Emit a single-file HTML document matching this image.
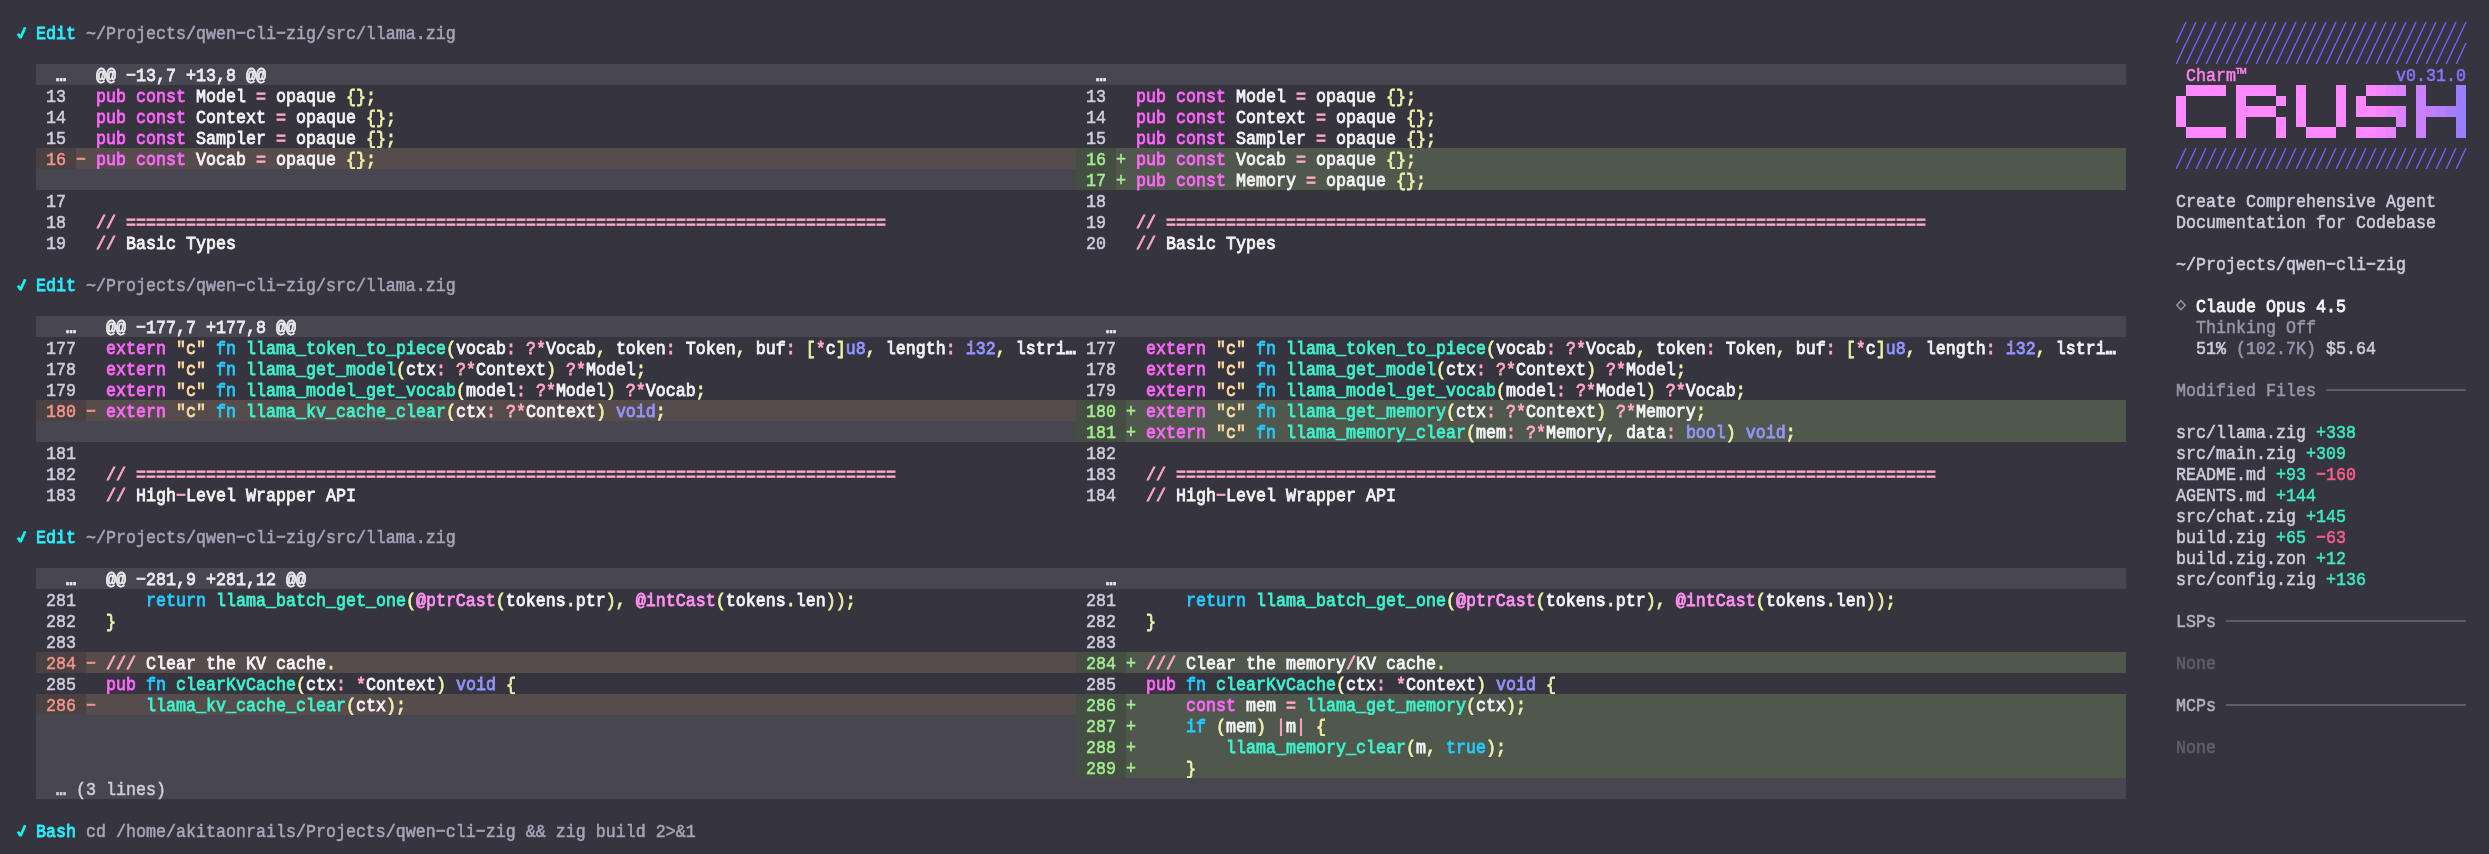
<!DOCTYPE html>
<html><head><meta charset="utf-8"><style>
html,body{margin:0;padding:0;width:2489px;height:854px;overflow:hidden;background:#36343f;}
.b{position:absolute;}
.t.c{-webkit-text-stroke:0.75px currentColor;}
b{font-weight:bold;}
.t{position:absolute;height:21px;line-height:21px;white-space:pre;font-family:"Liberation Mono",monospace;font-size:16.667px;color:#f6f4f8;font-weight:normal;-webkit-text-stroke:0.5px currentColor;transform-origin:0 0;transform:translateY(0.4px) scaleY(1.09);will-change:transform;}
</style></head><body>
<svg class="b" style="left:16px;top:22px" width="12" height="21"><path d="M1.9 11.6L4.5 15.9L9.2 5.2" stroke="#12f6ec" stroke-width="2.7" fill="none" stroke-linejoin="bevel"/></svg>
<div class="t c" style="left:36px;top:22px"><span style="color:#26f0ff">Edit</span></div>
<div class="t" style="left:86px;top:22px"><span style="color:#a6a4b8">~/Projects/qwen−cli−zig/src/llama.zig</span></div>
<div class="b" style="left:36px;top:64px;width:1040px;height:21px;background:#484651"></div>
<div class="t" style="left:36px;top:64px">  </div>
<div class="t" style="left:56px;top:64px"><span style="color:#ecebf0"><b>…</b></span></div>
<div class="t c" style="left:96px;top:64px"><span style="color:#ecebf0">@@ −13,7 +13,8 @@</span></div>
<div class="b" style="left:1076px;top:64px;width:1050px;height:21px;background:#484651"></div>
<div class="t" style="left:1076px;top:64px">  </div>
<div class="t" style="left:1096px;top:64px"><span style="color:#ecebf0"><b>…</b></span></div>
<div class="t" style="left:46px;top:85px"><span style="color:#d0ccdd">13</span></div>
<div class="t c" style="left:96px;top:85px"><span style="color:#ff68fc">pub</span> <span style="color:#ff68fc">const</span> <span style="color:#f6f4f8">Model</span> <span style="color:#ffa8c4">=</span> <span style="color:#f6f4f8">opaque</span> <span style="color:#eef0a8">{</span><span style="color:#eef0a8">}</span><span style="color:#eef0a8">;</span></div>
<div class="t" style="left:1086px;top:85px"><span style="color:#d0ccdd">13</span></div>
<div class="t c" style="left:1136px;top:85px"><span style="color:#ff68fc">pub</span> <span style="color:#ff68fc">const</span> <span style="color:#f6f4f8">Model</span> <span style="color:#ffa8c4">=</span> <span style="color:#f6f4f8">opaque</span> <span style="color:#eef0a8">{</span><span style="color:#eef0a8">}</span><span style="color:#eef0a8">;</span></div>
<div class="t" style="left:46px;top:106px"><span style="color:#d0ccdd">14</span></div>
<div class="t c" style="left:96px;top:106px"><span style="color:#ff68fc">pub</span> <span style="color:#ff68fc">const</span> <span style="color:#f6f4f8">Context</span> <span style="color:#ffa8c4">=</span> <span style="color:#f6f4f8">opaque</span> <span style="color:#eef0a8">{</span><span style="color:#eef0a8">}</span><span style="color:#eef0a8">;</span></div>
<div class="t" style="left:1086px;top:106px"><span style="color:#d0ccdd">14</span></div>
<div class="t c" style="left:1136px;top:106px"><span style="color:#ff68fc">pub</span> <span style="color:#ff68fc">const</span> <span style="color:#f6f4f8">Context</span> <span style="color:#ffa8c4">=</span> <span style="color:#f6f4f8">opaque</span> <span style="color:#eef0a8">{</span><span style="color:#eef0a8">}</span><span style="color:#eef0a8">;</span></div>
<div class="t" style="left:46px;top:127px"><span style="color:#d0ccdd">15</span></div>
<div class="t c" style="left:96px;top:127px"><span style="color:#ff68fc">pub</span> <span style="color:#ff68fc">const</span> <span style="color:#f6f4f8">Sampler</span> <span style="color:#ffa8c4">=</span> <span style="color:#f6f4f8">opaque</span> <span style="color:#eef0a8">{</span><span style="color:#eef0a8">}</span><span style="color:#eef0a8">;</span></div>
<div class="t" style="left:1086px;top:127px"><span style="color:#d0ccdd">15</span></div>
<div class="t c" style="left:1136px;top:127px"><span style="color:#ff68fc">pub</span> <span style="color:#ff68fc">const</span> <span style="color:#f6f4f8">Sampler</span> <span style="color:#ffa8c4">=</span> <span style="color:#f6f4f8">opaque</span> <span style="color:#eef0a8">{</span><span style="color:#eef0a8">}</span><span style="color:#eef0a8">;</span></div>
<div class="b" style="left:36px;top:148px;width:40px;height:21px;background:#494142"></div>
<div class="b" style="left:76px;top:148px;width:1000px;height:21px;background:#564c4c"></div>
<div class="t" style="left:46px;top:148px"><span style="color:#f4948c">16</span></div>
<div class="t" style="left:76px;top:148px"><span style="color:#f4948c">−</span></div>
<div class="t c" style="left:96px;top:148px"><span style="color:#ff68fc">pub</span> <span style="color:#ff68fc">const</span> <span style="color:#f6f4f8">Vocab</span> <span style="color:#ffa8c4">=</span> <span style="color:#f6f4f8">opaque</span> <span style="color:#eef0a8">{</span><span style="color:#eef0a8">}</span><span style="color:#eef0a8">;</span></div>
<div class="b" style="left:1076px;top:148px;width:40px;height:21px;background:#444e43"></div>
<div class="b" style="left:1116px;top:148px;width:1010px;height:21px;background:#50584d"></div>
<div class="t" style="left:1086px;top:148px"><span style="color:#a2ec8f">16</span></div>
<div class="t" style="left:1116px;top:148px"><span style="color:#a2ec8f">+</span></div>
<div class="t c" style="left:1136px;top:148px"><span style="color:#ff68fc">pub</span> <span style="color:#ff68fc">const</span> <span style="color:#f6f4f8">Vocab</span> <span style="color:#ffa8c4">=</span> <span style="color:#f6f4f8">opaque</span> <span style="color:#eef0a8">{</span><span style="color:#eef0a8">}</span><span style="color:#eef0a8">;</span></div>
<div class="b" style="left:36px;top:169px;width:1040px;height:21px;background:#484651"></div>
<div class="b" style="left:1076px;top:169px;width:40px;height:21px;background:#444e43"></div>
<div class="b" style="left:1116px;top:169px;width:1010px;height:21px;background:#50584d"></div>
<div class="t" style="left:1086px;top:169px"><span style="color:#a2ec8f">17</span></div>
<div class="t" style="left:1116px;top:169px"><span style="color:#a2ec8f">+</span></div>
<div class="t c" style="left:1136px;top:169px"><span style="color:#ff68fc">pub</span> <span style="color:#ff68fc">const</span> <span style="color:#f6f4f8">Memory</span> <span style="color:#ffa8c4">=</span> <span style="color:#f6f4f8">opaque</span> <span style="color:#eef0a8">{</span><span style="color:#eef0a8">}</span><span style="color:#eef0a8">;</span></div>
<div class="t" style="left:46px;top:190px"><span style="color:#d0ccdd">17</span></div>
<div class="t" style="left:1086px;top:190px"><span style="color:#d0ccdd">18</span></div>
<div class="t" style="left:46px;top:211px"><span style="color:#d0ccdd">18</span></div>
<div class="t c" style="left:96px;top:211px"><span style="color:#ffa8c4">/</span><span style="color:#ffa8c4">/</span> <span style="color:#ffa8c4">=</span><span style="color:#ffa8c4">=</span><span style="color:#ffa8c4">=</span><span style="color:#ffa8c4">=</span><span style="color:#ffa8c4">=</span><span style="color:#ffa8c4">=</span><span style="color:#ffa8c4">=</span><span style="color:#ffa8c4">=</span><span style="color:#ffa8c4">=</span><span style="color:#ffa8c4">=</span><span style="color:#ffa8c4">=</span><span style="color:#ffa8c4">=</span><span style="color:#ffa8c4">=</span><span style="color:#ffa8c4">=</span><span style="color:#ffa8c4">=</span><span style="color:#ffa8c4">=</span><span style="color:#ffa8c4">=</span><span style="color:#ffa8c4">=</span><span style="color:#ffa8c4">=</span><span style="color:#ffa8c4">=</span><span style="color:#ffa8c4">=</span><span style="color:#ffa8c4">=</span><span style="color:#ffa8c4">=</span><span style="color:#ffa8c4">=</span><span style="color:#ffa8c4">=</span><span style="color:#ffa8c4">=</span><span style="color:#ffa8c4">=</span><span style="color:#ffa8c4">=</span><span style="color:#ffa8c4">=</span><span style="color:#ffa8c4">=</span><span style="color:#ffa8c4">=</span><span style="color:#ffa8c4">=</span><span style="color:#ffa8c4">=</span><span style="color:#ffa8c4">=</span><span style="color:#ffa8c4">=</span><span style="color:#ffa8c4">=</span><span style="color:#ffa8c4">=</span><span style="color:#ffa8c4">=</span><span style="color:#ffa8c4">=</span><span style="color:#ffa8c4">=</span><span style="color:#ffa8c4">=</span><span style="color:#ffa8c4">=</span><span style="color:#ffa8c4">=</span><span style="color:#ffa8c4">=</span><span style="color:#ffa8c4">=</span><span style="color:#ffa8c4">=</span><span style="color:#ffa8c4">=</span><span style="color:#ffa8c4">=</span><span style="color:#ffa8c4">=</span><span style="color:#ffa8c4">=</span><span style="color:#ffa8c4">=</span><span style="color:#ffa8c4">=</span><span style="color:#ffa8c4">=</span><span style="color:#ffa8c4">=</span><span style="color:#ffa8c4">=</span><span style="color:#ffa8c4">=</span><span style="color:#ffa8c4">=</span><span style="color:#ffa8c4">=</span><span style="color:#ffa8c4">=</span><span style="color:#ffa8c4">=</span><span style="color:#ffa8c4">=</span><span style="color:#ffa8c4">=</span><span style="color:#ffa8c4">=</span><span style="color:#ffa8c4">=</span><span style="color:#ffa8c4">=</span><span style="color:#ffa8c4">=</span><span style="color:#ffa8c4">=</span><span style="color:#ffa8c4">=</span><span style="color:#ffa8c4">=</span><span style="color:#ffa8c4">=</span><span style="color:#ffa8c4">=</span><span style="color:#ffa8c4">=</span><span style="color:#ffa8c4">=</span><span style="color:#ffa8c4">=</span><span style="color:#ffa8c4">=</span><span style="color:#ffa8c4">=</span></div>
<div class="t" style="left:1086px;top:211px"><span style="color:#d0ccdd">19</span></div>
<div class="t c" style="left:1136px;top:211px"><span style="color:#ffa8c4">/</span><span style="color:#ffa8c4">/</span> <span style="color:#ffa8c4">=</span><span style="color:#ffa8c4">=</span><span style="color:#ffa8c4">=</span><span style="color:#ffa8c4">=</span><span style="color:#ffa8c4">=</span><span style="color:#ffa8c4">=</span><span style="color:#ffa8c4">=</span><span style="color:#ffa8c4">=</span><span style="color:#ffa8c4">=</span><span style="color:#ffa8c4">=</span><span style="color:#ffa8c4">=</span><span style="color:#ffa8c4">=</span><span style="color:#ffa8c4">=</span><span style="color:#ffa8c4">=</span><span style="color:#ffa8c4">=</span><span style="color:#ffa8c4">=</span><span style="color:#ffa8c4">=</span><span style="color:#ffa8c4">=</span><span style="color:#ffa8c4">=</span><span style="color:#ffa8c4">=</span><span style="color:#ffa8c4">=</span><span style="color:#ffa8c4">=</span><span style="color:#ffa8c4">=</span><span style="color:#ffa8c4">=</span><span style="color:#ffa8c4">=</span><span style="color:#ffa8c4">=</span><span style="color:#ffa8c4">=</span><span style="color:#ffa8c4">=</span><span style="color:#ffa8c4">=</span><span style="color:#ffa8c4">=</span><span style="color:#ffa8c4">=</span><span style="color:#ffa8c4">=</span><span style="color:#ffa8c4">=</span><span style="color:#ffa8c4">=</span><span style="color:#ffa8c4">=</span><span style="color:#ffa8c4">=</span><span style="color:#ffa8c4">=</span><span style="color:#ffa8c4">=</span><span style="color:#ffa8c4">=</span><span style="color:#ffa8c4">=</span><span style="color:#ffa8c4">=</span><span style="color:#ffa8c4">=</span><span style="color:#ffa8c4">=</span><span style="color:#ffa8c4">=</span><span style="color:#ffa8c4">=</span><span style="color:#ffa8c4">=</span><span style="color:#ffa8c4">=</span><span style="color:#ffa8c4">=</span><span style="color:#ffa8c4">=</span><span style="color:#ffa8c4">=</span><span style="color:#ffa8c4">=</span><span style="color:#ffa8c4">=</span><span style="color:#ffa8c4">=</span><span style="color:#ffa8c4">=</span><span style="color:#ffa8c4">=</span><span style="color:#ffa8c4">=</span><span style="color:#ffa8c4">=</span><span style="color:#ffa8c4">=</span><span style="color:#ffa8c4">=</span><span style="color:#ffa8c4">=</span><span style="color:#ffa8c4">=</span><span style="color:#ffa8c4">=</span><span style="color:#ffa8c4">=</span><span style="color:#ffa8c4">=</span><span style="color:#ffa8c4">=</span><span style="color:#ffa8c4">=</span><span style="color:#ffa8c4">=</span><span style="color:#ffa8c4">=</span><span style="color:#ffa8c4">=</span><span style="color:#ffa8c4">=</span><span style="color:#ffa8c4">=</span><span style="color:#ffa8c4">=</span><span style="color:#ffa8c4">=</span><span style="color:#ffa8c4">=</span><span style="color:#ffa8c4">=</span><span style="color:#ffa8c4">=</span></div>
<div class="t" style="left:46px;top:232px"><span style="color:#d0ccdd">19</span></div>
<div class="t c" style="left:96px;top:232px"><span style="color:#ffa8c4">/</span><span style="color:#ffa8c4">/</span> <span style="color:#f6f4f8">Basic</span> <span style="color:#f6f4f8">Types</span></div>
<div class="t" style="left:1086px;top:232px"><span style="color:#d0ccdd">20</span></div>
<div class="t c" style="left:1136px;top:232px"><span style="color:#ffa8c4">/</span><span style="color:#ffa8c4">/</span> <span style="color:#f6f4f8">Basic</span> <span style="color:#f6f4f8">Types</span></div>
<svg class="b" style="left:16px;top:274px" width="12" height="21"><path d="M1.9 11.6L4.5 15.9L9.2 5.2" stroke="#12f6ec" stroke-width="2.7" fill="none" stroke-linejoin="bevel"/></svg>
<div class="t c" style="left:36px;top:274px"><span style="color:#26f0ff">Edit</span></div>
<div class="t" style="left:86px;top:274px"><span style="color:#a6a4b8">~/Projects/qwen−cli−zig/src/llama.zig</span></div>
<div class="b" style="left:36px;top:316px;width:1040px;height:21px;background:#484651"></div>
<div class="t" style="left:36px;top:316px">   </div>
<div class="t" style="left:66px;top:316px"><span style="color:#ecebf0"><b>…</b></span></div>
<div class="t c" style="left:106px;top:316px"><span style="color:#ecebf0">@@ −177,7 +177,8 @@</span></div>
<div class="b" style="left:1076px;top:316px;width:1050px;height:21px;background:#484651"></div>
<div class="t" style="left:1076px;top:316px">   </div>
<div class="t" style="left:1106px;top:316px"><span style="color:#ecebf0"><b>…</b></span></div>
<div class="t" style="left:46px;top:337px"><span style="color:#d0ccdd">177</span></div>
<div class="t c" style="left:106px;top:337px"><span style="color:#ff68fc">extern</span> <span style="color:#ffdca2">"c"</span> <span style="color:#22ccff">fn</span> <span style="color:#3ef2cc">llama_token_to_piece</span><span style="color:#eef0a8">(</span><span style="color:#f6f4f8">vocab</span><span style="color:#ffa8c4">:</span> <span style="color:#ffa8c4">?</span><span style="color:#ffa8c4">*</span><span style="color:#f6f4f8">Vocab</span><span style="color:#eef0a8">,</span> <span style="color:#f6f4f8">token</span><span style="color:#ffa8c4">:</span> <span style="color:#f6f4f8">Token</span><span style="color:#eef0a8">,</span> <span style="color:#f6f4f8">buf</span><span style="color:#ffa8c4">:</span> <span style="color:#eef0a8">[</span><span style="color:#ffa8c4">*</span><span style="color:#f6f4f8">c</span><span style="color:#eef0a8">]</span><span style="color:#9494ff">u8</span><span style="color:#eef0a8">,</span> <span style="color:#f6f4f8">length</span><span style="color:#ffa8c4">:</span> <span style="color:#9494ff">i32</span><span style="color:#eef0a8">,</span> <span style="color:#f6f4f8">lstri</span><span style="color:#f6f4f8"><b>…</b></span></div>
<div class="t" style="left:1086px;top:337px"><span style="color:#d0ccdd">177</span></div>
<div class="t c" style="left:1146px;top:337px"><span style="color:#ff68fc">extern</span> <span style="color:#ffdca2">"c"</span> <span style="color:#22ccff">fn</span> <span style="color:#3ef2cc">llama_token_to_piece</span><span style="color:#eef0a8">(</span><span style="color:#f6f4f8">vocab</span><span style="color:#ffa8c4">:</span> <span style="color:#ffa8c4">?</span><span style="color:#ffa8c4">*</span><span style="color:#f6f4f8">Vocab</span><span style="color:#eef0a8">,</span> <span style="color:#f6f4f8">token</span><span style="color:#ffa8c4">:</span> <span style="color:#f6f4f8">Token</span><span style="color:#eef0a8">,</span> <span style="color:#f6f4f8">buf</span><span style="color:#ffa8c4">:</span> <span style="color:#eef0a8">[</span><span style="color:#ffa8c4">*</span><span style="color:#f6f4f8">c</span><span style="color:#eef0a8">]</span><span style="color:#9494ff">u8</span><span style="color:#eef0a8">,</span> <span style="color:#f6f4f8">length</span><span style="color:#ffa8c4">:</span> <span style="color:#9494ff">i32</span><span style="color:#eef0a8">,</span> <span style="color:#f6f4f8">lstri</span><span style="color:#f6f4f8"><b>…</b></span></div>
<div class="t" style="left:46px;top:358px"><span style="color:#d0ccdd">178</span></div>
<div class="t c" style="left:106px;top:358px"><span style="color:#ff68fc">extern</span> <span style="color:#ffdca2">"c"</span> <span style="color:#22ccff">fn</span> <span style="color:#3ef2cc">llama_get_model</span><span style="color:#eef0a8">(</span><span style="color:#f6f4f8">ctx</span><span style="color:#ffa8c4">:</span> <span style="color:#ffa8c4">?</span><span style="color:#ffa8c4">*</span><span style="color:#f6f4f8">Context</span><span style="color:#eef0a8">)</span> <span style="color:#ffa8c4">?</span><span style="color:#ffa8c4">*</span><span style="color:#f6f4f8">Model</span><span style="color:#eef0a8">;</span></div>
<div class="t" style="left:1086px;top:358px"><span style="color:#d0ccdd">178</span></div>
<div class="t c" style="left:1146px;top:358px"><span style="color:#ff68fc">extern</span> <span style="color:#ffdca2">"c"</span> <span style="color:#22ccff">fn</span> <span style="color:#3ef2cc">llama_get_model</span><span style="color:#eef0a8">(</span><span style="color:#f6f4f8">ctx</span><span style="color:#ffa8c4">:</span> <span style="color:#ffa8c4">?</span><span style="color:#ffa8c4">*</span><span style="color:#f6f4f8">Context</span><span style="color:#eef0a8">)</span> <span style="color:#ffa8c4">?</span><span style="color:#ffa8c4">*</span><span style="color:#f6f4f8">Model</span><span style="color:#eef0a8">;</span></div>
<div class="t" style="left:46px;top:379px"><span style="color:#d0ccdd">179</span></div>
<div class="t c" style="left:106px;top:379px"><span style="color:#ff68fc">extern</span> <span style="color:#ffdca2">"c"</span> <span style="color:#22ccff">fn</span> <span style="color:#3ef2cc">llama_model_get_vocab</span><span style="color:#eef0a8">(</span><span style="color:#f6f4f8">model</span><span style="color:#ffa8c4">:</span> <span style="color:#ffa8c4">?</span><span style="color:#ffa8c4">*</span><span style="color:#f6f4f8">Model</span><span style="color:#eef0a8">)</span> <span style="color:#ffa8c4">?</span><span style="color:#ffa8c4">*</span><span style="color:#f6f4f8">Vocab</span><span style="color:#eef0a8">;</span></div>
<div class="t" style="left:1086px;top:379px"><span style="color:#d0ccdd">179</span></div>
<div class="t c" style="left:1146px;top:379px"><span style="color:#ff68fc">extern</span> <span style="color:#ffdca2">"c"</span> <span style="color:#22ccff">fn</span> <span style="color:#3ef2cc">llama_model_get_vocab</span><span style="color:#eef0a8">(</span><span style="color:#f6f4f8">model</span><span style="color:#ffa8c4">:</span> <span style="color:#ffa8c4">?</span><span style="color:#ffa8c4">*</span><span style="color:#f6f4f8">Model</span><span style="color:#eef0a8">)</span> <span style="color:#ffa8c4">?</span><span style="color:#ffa8c4">*</span><span style="color:#f6f4f8">Vocab</span><span style="color:#eef0a8">;</span></div>
<div class="b" style="left:36px;top:400px;width:50px;height:21px;background:#494142"></div>
<div class="b" style="left:86px;top:400px;width:990px;height:21px;background:#564c4c"></div>
<div class="t" style="left:46px;top:400px"><span style="color:#f4948c">180</span></div>
<div class="t" style="left:86px;top:400px"><span style="color:#f4948c">−</span></div>
<div class="t c" style="left:106px;top:400px"><span style="color:#ff68fc">extern</span> <span style="color:#ffdca2">"c"</span> <span style="color:#22ccff">fn</span> <span style="color:#3ef2cc">llama_kv_cache_clear</span><span style="color:#eef0a8">(</span><span style="color:#f6f4f8">ctx</span><span style="color:#ffa8c4">:</span> <span style="color:#ffa8c4">?</span><span style="color:#ffa8c4">*</span><span style="color:#f6f4f8">Context</span><span style="color:#eef0a8">)</span> <span style="color:#9494ff">void</span><span style="color:#eef0a8">;</span></div>
<div class="b" style="left:1076px;top:400px;width:50px;height:21px;background:#444e43"></div>
<div class="b" style="left:1126px;top:400px;width:1000px;height:21px;background:#50584d"></div>
<div class="t" style="left:1086px;top:400px"><span style="color:#a2ec8f">180</span></div>
<div class="t" style="left:1126px;top:400px"><span style="color:#a2ec8f">+</span></div>
<div class="t c" style="left:1146px;top:400px"><span style="color:#ff68fc">extern</span> <span style="color:#ffdca2">"c"</span> <span style="color:#22ccff">fn</span> <span style="color:#3ef2cc">llama_get_memory</span><span style="color:#eef0a8">(</span><span style="color:#f6f4f8">ctx</span><span style="color:#ffa8c4">:</span> <span style="color:#ffa8c4">?</span><span style="color:#ffa8c4">*</span><span style="color:#f6f4f8">Context</span><span style="color:#eef0a8">)</span> <span style="color:#ffa8c4">?</span><span style="color:#ffa8c4">*</span><span style="color:#f6f4f8">Memory</span><span style="color:#eef0a8">;</span></div>
<div class="b" style="left:36px;top:421px;width:1040px;height:21px;background:#484651"></div>
<div class="b" style="left:1076px;top:421px;width:50px;height:21px;background:#444e43"></div>
<div class="b" style="left:1126px;top:421px;width:1000px;height:21px;background:#50584d"></div>
<div class="t" style="left:1086px;top:421px"><span style="color:#a2ec8f">181</span></div>
<div class="t" style="left:1126px;top:421px"><span style="color:#a2ec8f">+</span></div>
<div class="t c" style="left:1146px;top:421px"><span style="color:#ff68fc">extern</span> <span style="color:#ffdca2">"c"</span> <span style="color:#22ccff">fn</span> <span style="color:#3ef2cc">llama_memory_clear</span><span style="color:#eef0a8">(</span><span style="color:#f6f4f8">mem</span><span style="color:#ffa8c4">:</span> <span style="color:#ffa8c4">?</span><span style="color:#ffa8c4">*</span><span style="color:#f6f4f8">Memory</span><span style="color:#eef0a8">,</span> <span style="color:#f6f4f8">data</span><span style="color:#ffa8c4">:</span> <span style="color:#9494ff">bool</span><span style="color:#eef0a8">)</span> <span style="color:#9494ff">void</span><span style="color:#eef0a8">;</span></div>
<div class="t" style="left:46px;top:442px"><span style="color:#d0ccdd">181</span></div>
<div class="t" style="left:1086px;top:442px"><span style="color:#d0ccdd">182</span></div>
<div class="t" style="left:46px;top:463px"><span style="color:#d0ccdd">182</span></div>
<div class="t c" style="left:106px;top:463px"><span style="color:#ffa8c4">/</span><span style="color:#ffa8c4">/</span> <span style="color:#ffa8c4">=</span><span style="color:#ffa8c4">=</span><span style="color:#ffa8c4">=</span><span style="color:#ffa8c4">=</span><span style="color:#ffa8c4">=</span><span style="color:#ffa8c4">=</span><span style="color:#ffa8c4">=</span><span style="color:#ffa8c4">=</span><span style="color:#ffa8c4">=</span><span style="color:#ffa8c4">=</span><span style="color:#ffa8c4">=</span><span style="color:#ffa8c4">=</span><span style="color:#ffa8c4">=</span><span style="color:#ffa8c4">=</span><span style="color:#ffa8c4">=</span><span style="color:#ffa8c4">=</span><span style="color:#ffa8c4">=</span><span style="color:#ffa8c4">=</span><span style="color:#ffa8c4">=</span><span style="color:#ffa8c4">=</span><span style="color:#ffa8c4">=</span><span style="color:#ffa8c4">=</span><span style="color:#ffa8c4">=</span><span style="color:#ffa8c4">=</span><span style="color:#ffa8c4">=</span><span style="color:#ffa8c4">=</span><span style="color:#ffa8c4">=</span><span style="color:#ffa8c4">=</span><span style="color:#ffa8c4">=</span><span style="color:#ffa8c4">=</span><span style="color:#ffa8c4">=</span><span style="color:#ffa8c4">=</span><span style="color:#ffa8c4">=</span><span style="color:#ffa8c4">=</span><span style="color:#ffa8c4">=</span><span style="color:#ffa8c4">=</span><span style="color:#ffa8c4">=</span><span style="color:#ffa8c4">=</span><span style="color:#ffa8c4">=</span><span style="color:#ffa8c4">=</span><span style="color:#ffa8c4">=</span><span style="color:#ffa8c4">=</span><span style="color:#ffa8c4">=</span><span style="color:#ffa8c4">=</span><span style="color:#ffa8c4">=</span><span style="color:#ffa8c4">=</span><span style="color:#ffa8c4">=</span><span style="color:#ffa8c4">=</span><span style="color:#ffa8c4">=</span><span style="color:#ffa8c4">=</span><span style="color:#ffa8c4">=</span><span style="color:#ffa8c4">=</span><span style="color:#ffa8c4">=</span><span style="color:#ffa8c4">=</span><span style="color:#ffa8c4">=</span><span style="color:#ffa8c4">=</span><span style="color:#ffa8c4">=</span><span style="color:#ffa8c4">=</span><span style="color:#ffa8c4">=</span><span style="color:#ffa8c4">=</span><span style="color:#ffa8c4">=</span><span style="color:#ffa8c4">=</span><span style="color:#ffa8c4">=</span><span style="color:#ffa8c4">=</span><span style="color:#ffa8c4">=</span><span style="color:#ffa8c4">=</span><span style="color:#ffa8c4">=</span><span style="color:#ffa8c4">=</span><span style="color:#ffa8c4">=</span><span style="color:#ffa8c4">=</span><span style="color:#ffa8c4">=</span><span style="color:#ffa8c4">=</span><span style="color:#ffa8c4">=</span><span style="color:#ffa8c4">=</span><span style="color:#ffa8c4">=</span><span style="color:#ffa8c4">=</span></div>
<div class="t" style="left:1086px;top:463px"><span style="color:#d0ccdd">183</span></div>
<div class="t c" style="left:1146px;top:463px"><span style="color:#ffa8c4">/</span><span style="color:#ffa8c4">/</span> <span style="color:#ffa8c4">=</span><span style="color:#ffa8c4">=</span><span style="color:#ffa8c4">=</span><span style="color:#ffa8c4">=</span><span style="color:#ffa8c4">=</span><span style="color:#ffa8c4">=</span><span style="color:#ffa8c4">=</span><span style="color:#ffa8c4">=</span><span style="color:#ffa8c4">=</span><span style="color:#ffa8c4">=</span><span style="color:#ffa8c4">=</span><span style="color:#ffa8c4">=</span><span style="color:#ffa8c4">=</span><span style="color:#ffa8c4">=</span><span style="color:#ffa8c4">=</span><span style="color:#ffa8c4">=</span><span style="color:#ffa8c4">=</span><span style="color:#ffa8c4">=</span><span style="color:#ffa8c4">=</span><span style="color:#ffa8c4">=</span><span style="color:#ffa8c4">=</span><span style="color:#ffa8c4">=</span><span style="color:#ffa8c4">=</span><span style="color:#ffa8c4">=</span><span style="color:#ffa8c4">=</span><span style="color:#ffa8c4">=</span><span style="color:#ffa8c4">=</span><span style="color:#ffa8c4">=</span><span style="color:#ffa8c4">=</span><span style="color:#ffa8c4">=</span><span style="color:#ffa8c4">=</span><span style="color:#ffa8c4">=</span><span style="color:#ffa8c4">=</span><span style="color:#ffa8c4">=</span><span style="color:#ffa8c4">=</span><span style="color:#ffa8c4">=</span><span style="color:#ffa8c4">=</span><span style="color:#ffa8c4">=</span><span style="color:#ffa8c4">=</span><span style="color:#ffa8c4">=</span><span style="color:#ffa8c4">=</span><span style="color:#ffa8c4">=</span><span style="color:#ffa8c4">=</span><span style="color:#ffa8c4">=</span><span style="color:#ffa8c4">=</span><span style="color:#ffa8c4">=</span><span style="color:#ffa8c4">=</span><span style="color:#ffa8c4">=</span><span style="color:#ffa8c4">=</span><span style="color:#ffa8c4">=</span><span style="color:#ffa8c4">=</span><span style="color:#ffa8c4">=</span><span style="color:#ffa8c4">=</span><span style="color:#ffa8c4">=</span><span style="color:#ffa8c4">=</span><span style="color:#ffa8c4">=</span><span style="color:#ffa8c4">=</span><span style="color:#ffa8c4">=</span><span style="color:#ffa8c4">=</span><span style="color:#ffa8c4">=</span><span style="color:#ffa8c4">=</span><span style="color:#ffa8c4">=</span><span style="color:#ffa8c4">=</span><span style="color:#ffa8c4">=</span><span style="color:#ffa8c4">=</span><span style="color:#ffa8c4">=</span><span style="color:#ffa8c4">=</span><span style="color:#ffa8c4">=</span><span style="color:#ffa8c4">=</span><span style="color:#ffa8c4">=</span><span style="color:#ffa8c4">=</span><span style="color:#ffa8c4">=</span><span style="color:#ffa8c4">=</span><span style="color:#ffa8c4">=</span><span style="color:#ffa8c4">=</span><span style="color:#ffa8c4">=</span></div>
<div class="t" style="left:46px;top:484px"><span style="color:#d0ccdd">183</span></div>
<div class="t c" style="left:106px;top:484px"><span style="color:#ffa8c4">/</span><span style="color:#ffa8c4">/</span> <span style="color:#f6f4f8">High</span><span style="color:#ffa8c4">−</span><span style="color:#f6f4f8">Level</span> <span style="color:#f6f4f8">Wrapper</span> <span style="color:#f6f4f8">API</span></div>
<div class="t" style="left:1086px;top:484px"><span style="color:#d0ccdd">184</span></div>
<div class="t c" style="left:1146px;top:484px"><span style="color:#ffa8c4">/</span><span style="color:#ffa8c4">/</span> <span style="color:#f6f4f8">High</span><span style="color:#ffa8c4">−</span><span style="color:#f6f4f8">Level</span> <span style="color:#f6f4f8">Wrapper</span> <span style="color:#f6f4f8">API</span></div>
<svg class="b" style="left:16px;top:526px" width="12" height="21"><path d="M1.9 11.6L4.5 15.9L9.2 5.2" stroke="#12f6ec" stroke-width="2.7" fill="none" stroke-linejoin="bevel"/></svg>
<div class="t c" style="left:36px;top:526px"><span style="color:#26f0ff">Edit</span></div>
<div class="t" style="left:86px;top:526px"><span style="color:#a6a4b8">~/Projects/qwen−cli−zig/src/llama.zig</span></div>
<div class="b" style="left:36px;top:568px;width:1040px;height:21px;background:#484651"></div>
<div class="t" style="left:36px;top:568px">   </div>
<div class="t" style="left:66px;top:568px"><span style="color:#ecebf0"><b>…</b></span></div>
<div class="t c" style="left:106px;top:568px"><span style="color:#ecebf0">@@ −281,9 +281,12 @@</span></div>
<div class="b" style="left:1076px;top:568px;width:1050px;height:21px;background:#484651"></div>
<div class="t" style="left:1076px;top:568px">   </div>
<div class="t" style="left:1106px;top:568px"><span style="color:#ecebf0"><b>…</b></span></div>
<div class="t" style="left:46px;top:589px"><span style="color:#d0ccdd">281</span></div>
<div class="t c" style="left:106px;top:589px">    <span style="color:#22ccff">return</span> <span style="color:#3ef2cc">llama_batch_get_one</span><span style="color:#eef0a8">(</span><span style="color:#ff92f2">@ptrCast</span><span style="color:#eef0a8">(</span><span style="color:#f6f4f8">tokens</span><span style="color:#eef0a8">.</span><span style="color:#f6f4f8">ptr</span><span style="color:#eef0a8">)</span><span style="color:#eef0a8">,</span> <span style="color:#ff92f2">@intCast</span><span style="color:#eef0a8">(</span><span style="color:#f6f4f8">tokens</span><span style="color:#eef0a8">.</span><span style="color:#f6f4f8">len</span><span style="color:#eef0a8">)</span><span style="color:#eef0a8">)</span><span style="color:#eef0a8">;</span></div>
<div class="t" style="left:1086px;top:589px"><span style="color:#d0ccdd">281</span></div>
<div class="t c" style="left:1146px;top:589px">    <span style="color:#22ccff">return</span> <span style="color:#3ef2cc">llama_batch_get_one</span><span style="color:#eef0a8">(</span><span style="color:#ff92f2">@ptrCast</span><span style="color:#eef0a8">(</span><span style="color:#f6f4f8">tokens</span><span style="color:#eef0a8">.</span><span style="color:#f6f4f8">ptr</span><span style="color:#eef0a8">)</span><span style="color:#eef0a8">,</span> <span style="color:#ff92f2">@intCast</span><span style="color:#eef0a8">(</span><span style="color:#f6f4f8">tokens</span><span style="color:#eef0a8">.</span><span style="color:#f6f4f8">len</span><span style="color:#eef0a8">)</span><span style="color:#eef0a8">)</span><span style="color:#eef0a8">;</span></div>
<div class="t" style="left:46px;top:610px"><span style="color:#d0ccdd">282</span></div>
<div class="t c" style="left:106px;top:610px"><span style="color:#eef0a8">}</span></div>
<div class="t" style="left:1086px;top:610px"><span style="color:#d0ccdd">282</span></div>
<div class="t c" style="left:1146px;top:610px"><span style="color:#eef0a8">}</span></div>
<div class="t" style="left:46px;top:631px"><span style="color:#d0ccdd">283</span></div>
<div class="t" style="left:1086px;top:631px"><span style="color:#d0ccdd">283</span></div>
<div class="b" style="left:36px;top:652px;width:50px;height:21px;background:#494142"></div>
<div class="b" style="left:86px;top:652px;width:990px;height:21px;background:#564c4c"></div>
<div class="t" style="left:46px;top:652px"><span style="color:#f4948c">284</span></div>
<div class="t" style="left:86px;top:652px"><span style="color:#f4948c">−</span></div>
<div class="t c" style="left:106px;top:652px"><span style="color:#ffa8c4">/</span><span style="color:#ffa8c4">/</span><span style="color:#ffa8c4">/</span> <span style="color:#f6f4f8">Clear</span> <span style="color:#f6f4f8">the</span> <span style="color:#f6f4f8">KV</span> <span style="color:#f6f4f8">cache</span><span style="color:#eef0a8">.</span></div>
<div class="b" style="left:1076px;top:652px;width:50px;height:21px;background:#444e43"></div>
<div class="b" style="left:1126px;top:652px;width:1000px;height:21px;background:#50584d"></div>
<div class="t" style="left:1086px;top:652px"><span style="color:#a2ec8f">284</span></div>
<div class="t" style="left:1126px;top:652px"><span style="color:#a2ec8f">+</span></div>
<div class="t c" style="left:1146px;top:652px"><span style="color:#ffa8c4">/</span><span style="color:#ffa8c4">/</span><span style="color:#ffa8c4">/</span> <span style="color:#f6f4f8">Clear</span> <span style="color:#f6f4f8">the</span> <span style="color:#f6f4f8">memory</span><span style="color:#ffa8c4">/</span><span style="color:#f6f4f8">KV</span> <span style="color:#f6f4f8">cache</span><span style="color:#eef0a8">.</span></div>
<div class="t" style="left:46px;top:673px"><span style="color:#d0ccdd">285</span></div>
<div class="t c" style="left:106px;top:673px"><span style="color:#ff68fc">pub</span> <span style="color:#22ccff">fn</span> <span style="color:#3ef2cc">clearKvCache</span><span style="color:#eef0a8">(</span><span style="color:#f6f4f8">ctx</span><span style="color:#ffa8c4">:</span> <span style="color:#ffa8c4">*</span><span style="color:#f6f4f8">Context</span><span style="color:#eef0a8">)</span> <span style="color:#9494ff">void</span> <span style="color:#eef0a8">{</span></div>
<div class="t" style="left:1086px;top:673px"><span style="color:#d0ccdd">285</span></div>
<div class="t c" style="left:1146px;top:673px"><span style="color:#ff68fc">pub</span> <span style="color:#22ccff">fn</span> <span style="color:#3ef2cc">clearKvCache</span><span style="color:#eef0a8">(</span><span style="color:#f6f4f8">ctx</span><span style="color:#ffa8c4">:</span> <span style="color:#ffa8c4">*</span><span style="color:#f6f4f8">Context</span><span style="color:#eef0a8">)</span> <span style="color:#9494ff">void</span> <span style="color:#eef0a8">{</span></div>
<div class="b" style="left:36px;top:694px;width:50px;height:21px;background:#494142"></div>
<div class="b" style="left:86px;top:694px;width:990px;height:21px;background:#564c4c"></div>
<div class="t" style="left:46px;top:694px"><span style="color:#f4948c">286</span></div>
<div class="t" style="left:86px;top:694px"><span style="color:#f4948c">−</span></div>
<div class="t c" style="left:106px;top:694px">    <span style="color:#3ef2cc">llama_kv_cache_clear</span><span style="color:#eef0a8">(</span><span style="color:#f6f4f8">ctx</span><span style="color:#eef0a8">)</span><span style="color:#eef0a8">;</span></div>
<div class="b" style="left:1076px;top:694px;width:50px;height:21px;background:#444e43"></div>
<div class="b" style="left:1126px;top:694px;width:1000px;height:21px;background:#50584d"></div>
<div class="t" style="left:1086px;top:694px"><span style="color:#a2ec8f">286</span></div>
<div class="t" style="left:1126px;top:694px"><span style="color:#a2ec8f">+</span></div>
<div class="t c" style="left:1146px;top:694px">    <span style="color:#ff68fc">const</span> <span style="color:#f6f4f8">mem</span> <span style="color:#ffa8c4">=</span> <span style="color:#3ef2cc">llama_get_memory</span><span style="color:#eef0a8">(</span><span style="color:#f6f4f8">ctx</span><span style="color:#eef0a8">)</span><span style="color:#eef0a8">;</span></div>
<div class="b" style="left:36px;top:715px;width:1040px;height:21px;background:#484651"></div>
<div class="b" style="left:1076px;top:715px;width:50px;height:21px;background:#444e43"></div>
<div class="b" style="left:1126px;top:715px;width:1000px;height:21px;background:#50584d"></div>
<div class="t" style="left:1086px;top:715px"><span style="color:#a2ec8f">287</span></div>
<div class="t" style="left:1126px;top:715px"><span style="color:#a2ec8f">+</span></div>
<div class="t c" style="left:1146px;top:715px">    <span style="color:#22ccff">if</span> <span style="color:#eef0a8">(</span><span style="color:#f6f4f8">mem</span><span style="color:#eef0a8">)</span> <span style="color:#ffa8c4">|</span><span style="color:#f6f4f8">m</span><span style="color:#ffa8c4">|</span> <span style="color:#eef0a8">{</span></div>
<div class="b" style="left:36px;top:736px;width:1040px;height:21px;background:#484651"></div>
<div class="b" style="left:1076px;top:736px;width:50px;height:21px;background:#444e43"></div>
<div class="b" style="left:1126px;top:736px;width:1000px;height:21px;background:#50584d"></div>
<div class="t" style="left:1086px;top:736px"><span style="color:#a2ec8f">288</span></div>
<div class="t" style="left:1126px;top:736px"><span style="color:#a2ec8f">+</span></div>
<div class="t c" style="left:1146px;top:736px">        <span style="color:#3ef2cc">llama_memory_clear</span><span style="color:#eef0a8">(</span><span style="color:#f6f4f8">m</span><span style="color:#eef0a8">,</span> <span style="color:#22ccff">true</span><span style="color:#eef0a8">)</span><span style="color:#eef0a8">;</span></div>
<div class="b" style="left:36px;top:757px;width:1040px;height:21px;background:#484651"></div>
<div class="b" style="left:1076px;top:757px;width:50px;height:21px;background:#444e43"></div>
<div class="b" style="left:1126px;top:757px;width:1000px;height:21px;background:#50584d"></div>
<div class="t" style="left:1086px;top:757px"><span style="color:#a2ec8f">289</span></div>
<div class="t" style="left:1126px;top:757px"><span style="color:#a2ec8f">+</span></div>
<div class="t c" style="left:1146px;top:757px">    <span style="color:#eef0a8">}</span></div>
<div class="b" style="left:36px;top:778px;width:2090px;height:21px;background:#484651"></div>
<div class="t" style="left:56px;top:778px"><span style="color:#cfccd8"><b>…</b> (3 lines)</span></div>
<svg class="b" style="left:16px;top:820px" width="12" height="21"><path d="M1.9 11.6L4.5 15.9L9.2 5.2" stroke="#12f6ec" stroke-width="2.7" fill="none" stroke-linejoin="bevel"/></svg>
<div class="t c" style="left:36px;top:820px"><span style="color:#26f0ff">Bash</span></div>
<div class="t" style="left:86px;top:820px"><span style="color:#a6a4b8">cd /home/akitaonrails/Projects/qwen−cli−zig &amp;&amp; zig build 2&gt;&amp;1</span></div>
<svg class="b" style="left:2176px;top:22px" width="292" height="21"><path d="M0.2 21L10.0 0M10.2 21L20.0 0M20.2 21L30.0 0M30.2 21L40.0 0M40.2 21L50.0 0M50.2 21L60.0 0M60.2 21L70.0 0M70.2 21L80.0 0M80.2 21L90.0 0M90.2 21L100.0 0M100.2 21L110.0 0M110.2 21L120.0 0M120.2 21L130.0 0M130.2 21L140.0 0M140.2 21L150.0 0M150.2 21L160.0 0M160.2 21L170.0 0M170.2 21L180.0 0M180.2 21L190.0 0M190.2 21L200.0 0M200.2 21L210.0 0M210.2 21L220.0 0M220.2 21L230.0 0M230.2 21L240.0 0M240.2 21L250.0 0M250.2 21L260.0 0M260.2 21L270.0 0M270.2 21L280.0 0M280.2 21L290.0 0" stroke="#7b5cff" stroke-width="1.4" fill="none"/></svg>
<svg class="b" style="left:2176px;top:43px" width="292" height="21"><path d="M0.2 21L10.0 0M10.2 21L20.0 0M20.2 21L30.0 0M30.2 21L40.0 0M40.2 21L50.0 0M50.2 21L60.0 0M60.2 21L70.0 0M70.2 21L80.0 0M80.2 21L90.0 0M90.2 21L100.0 0M100.2 21L110.0 0M110.2 21L120.0 0M120.2 21L130.0 0M130.2 21L140.0 0M140.2 21L150.0 0M150.2 21L160.0 0M160.2 21L170.0 0M170.2 21L180.0 0M180.2 21L190.0 0M190.2 21L200.0 0M200.2 21L210.0 0M210.2 21L220.0 0M220.2 21L230.0 0M230.2 21L240.0 0M240.2 21L250.0 0M250.2 21L260.0 0M260.2 21L270.0 0M270.2 21L280.0 0M280.2 21L290.0 0" stroke="#7b5cff" stroke-width="1.4" fill="none"/></svg>
<svg class="b" style="left:2176px;top:148px" width="292" height="21"><path d="M0.2 21L10.0 0M10.2 21L20.0 0M20.2 21L30.0 0M30.2 21L40.0 0M40.2 21L50.0 0M50.2 21L60.0 0M60.2 21L70.0 0M70.2 21L80.0 0M80.2 21L90.0 0M90.2 21L100.0 0M100.2 21L110.0 0M110.2 21L120.0 0M120.2 21L130.0 0M130.2 21L140.0 0M140.2 21L150.0 0M150.2 21L160.0 0M160.2 21L170.0 0M170.2 21L180.0 0M180.2 21L190.0 0M190.2 21L200.0 0M200.2 21L210.0 0M210.2 21L220.0 0M220.2 21L230.0 0M230.2 21L240.0 0M240.2 21L250.0 0M250.2 21L260.0 0M260.2 21L270.0 0M270.2 21L280.0 0M280.2 21L290.0 0" stroke="#7b5cff" stroke-width="1.4" fill="none"/></svg>
<div class="t" style="left:2186px;top:64px"><span style="color:#ff80f0">Charm™</span></div>
<div class="t" style="left:2396px;top:64px"><span style="color:#8f73ff">v0.31.0</span></div>
<div class="b" style="left:2186px;top:85.0px;width:10px;height:10.5px;background:#ff88ff"></div>
<div class="b" style="left:2196px;top:85.0px;width:10px;height:10.5px;background:#ff88ff"></div>
<div class="b" style="left:2206px;top:85.0px;width:10px;height:10.5px;background:#ff88ff"></div>
<div class="b" style="left:2216px;top:85.0px;width:10px;height:10.5px;background:#ff88ff"></div>
<div class="b" style="left:2236px;top:85.0px;width:10px;height:10.5px;background:#ff88ff"></div>
<div class="b" style="left:2246px;top:85.0px;width:10px;height:10.5px;background:#ff88ff"></div>
<div class="b" style="left:2256px;top:85.0px;width:10px;height:10.5px;background:#ff88ff"></div>
<div class="b" style="left:2266px;top:85.0px;width:10px;height:10.5px;background:#ff88ff"></div>
<div class="b" style="left:2296px;top:85.0px;width:10px;height:10.5px;background:#ff88ff"></div>
<div class="b" style="left:2336px;top:85.0px;width:10px;height:10.5px;background:#ff88ff"></div>
<div class="b" style="left:2366px;top:85.0px;width:10px;height:10.5px;background:#ff88ff"></div>
<div class="b" style="left:2376px;top:85.0px;width:10px;height:10.5px;background:#f585ff"></div>
<div class="b" style="left:2386px;top:85.0px;width:10px;height:10.5px;background:#e883ff"></div>
<div class="b" style="left:2396px;top:85.0px;width:10px;height:10.5px;background:#da82ff"></div>
<div class="b" style="left:2416px;top:85.0px;width:10px;height:10.5px;background:#cb80ff"></div>
<div class="b" style="left:2456px;top:85.0px;width:10px;height:10.5px;background:#9c7cff"></div>
<div class="b" style="left:2176px;top:95.5px;width:10px;height:10.5px;background:#ff88ff"></div>
<div class="b" style="left:2236px;top:95.5px;width:10px;height:10.5px;background:#ff88ff"></div>
<div class="b" style="left:2276px;top:95.5px;width:10px;height:10.5px;background:#ff88ff"></div>
<div class="b" style="left:2296px;top:95.5px;width:10px;height:10.5px;background:#ff88ff"></div>
<div class="b" style="left:2336px;top:95.5px;width:10px;height:10.5px;background:#ff88ff"></div>
<div class="b" style="left:2356px;top:95.5px;width:10px;height:10.5px;background:#ff88ff"></div>
<div class="b" style="left:2416px;top:95.5px;width:10px;height:10.5px;background:#cb80ff"></div>
<div class="b" style="left:2456px;top:95.5px;width:10px;height:10.5px;background:#9c7cff"></div>
<div class="b" style="left:2176px;top:106.0px;width:10px;height:10.5px;background:#ff88ff"></div>
<div class="b" style="left:2236px;top:106.0px;width:10px;height:10.5px;background:#ff88ff"></div>
<div class="b" style="left:2246px;top:106.0px;width:10px;height:10.5px;background:#ff88ff"></div>
<div class="b" style="left:2256px;top:106.0px;width:10px;height:10.5px;background:#ff88ff"></div>
<div class="b" style="left:2266px;top:106.0px;width:10px;height:10.5px;background:#ff88ff"></div>
<div class="b" style="left:2296px;top:106.0px;width:10px;height:10.5px;background:#ff88ff"></div>
<div class="b" style="left:2336px;top:106.0px;width:10px;height:10.5px;background:#ff88ff"></div>
<div class="b" style="left:2356px;top:106.0px;width:10px;height:10.5px;background:#ff88ff"></div>
<div class="b" style="left:2366px;top:106.0px;width:10px;height:10.5px;background:#ff88ff"></div>
<div class="b" style="left:2376px;top:106.0px;width:10px;height:10.5px;background:#f585ff"></div>
<div class="b" style="left:2386px;top:106.0px;width:10px;height:10.5px;background:#e883ff"></div>
<div class="b" style="left:2396px;top:106.0px;width:10px;height:10.5px;background:#da82ff"></div>
<div class="b" style="left:2416px;top:106.0px;width:10px;height:10.5px;background:#cb80ff"></div>
<div class="b" style="left:2426px;top:106.0px;width:10px;height:10.5px;background:#c07fff"></div>
<div class="b" style="left:2436px;top:106.0px;width:10px;height:10.5px;background:#b47eff"></div>
<div class="b" style="left:2446px;top:106.0px;width:10px;height:10.5px;background:#a87dff"></div>
<div class="b" style="left:2456px;top:106.0px;width:10px;height:10.5px;background:#9c7cff"></div>
<div class="b" style="left:2176px;top:116.5px;width:10px;height:10.5px;background:#ff88ff"></div>
<div class="b" style="left:2236px;top:116.5px;width:10px;height:10.5px;background:#ff88ff"></div>
<div class="b" style="left:2276px;top:116.5px;width:10px;height:10.5px;background:#ff88ff"></div>
<div class="b" style="left:2296px;top:116.5px;width:10px;height:10.5px;background:#ff88ff"></div>
<div class="b" style="left:2336px;top:116.5px;width:10px;height:10.5px;background:#ff88ff"></div>
<div class="b" style="left:2396px;top:116.5px;width:10px;height:10.5px;background:#da82ff"></div>
<div class="b" style="left:2416px;top:116.5px;width:10px;height:10.5px;background:#cb80ff"></div>
<div class="b" style="left:2456px;top:116.5px;width:10px;height:10.5px;background:#9c7cff"></div>
<div class="b" style="left:2186px;top:127.0px;width:10px;height:10.5px;background:#ff88ff"></div>
<div class="b" style="left:2196px;top:127.0px;width:10px;height:10.5px;background:#ff88ff"></div>
<div class="b" style="left:2206px;top:127.0px;width:10px;height:10.5px;background:#ff88ff"></div>
<div class="b" style="left:2216px;top:127.0px;width:10px;height:10.5px;background:#ff88ff"></div>
<div class="b" style="left:2236px;top:127.0px;width:10px;height:10.5px;background:#ff88ff"></div>
<div class="b" style="left:2276px;top:127.0px;width:10px;height:10.5px;background:#ff88ff"></div>
<div class="b" style="left:2306px;top:127.0px;width:10px;height:10.5px;background:#ff88ff"></div>
<div class="b" style="left:2316px;top:127.0px;width:10px;height:10.5px;background:#ff88ff"></div>
<div class="b" style="left:2326px;top:127.0px;width:10px;height:10.5px;background:#ff88ff"></div>
<div class="b" style="left:2356px;top:127.0px;width:10px;height:10.5px;background:#ff88ff"></div>
<div class="b" style="left:2366px;top:127.0px;width:10px;height:10.5px;background:#ff88ff"></div>
<div class="b" style="left:2376px;top:127.0px;width:10px;height:10.5px;background:#f585ff"></div>
<div class="b" style="left:2386px;top:127.0px;width:10px;height:10.5px;background:#e883ff"></div>
<div class="b" style="left:2416px;top:127.0px;width:10px;height:10.5px;background:#cb80ff"></div>
<div class="b" style="left:2456px;top:127.0px;width:10px;height:10.5px;background:#9c7cff"></div>
<div class="t" style="left:2176px;top:190px"><span style="color:#d0ccdc">Create Comprehensive Agent</span></div>
<div class="t" style="left:2176px;top:211px"><span style="color:#d0ccdc">Documentation for Codebase</span></div>
<div class="t" style="left:2176px;top:253px"><span style="color:#d0ccdc">~/Projects/qwen−cli−zig</span></div>
<svg class="b" style="left:2176px;top:295px" width="10" height="21"><path d="M5 5.6L9.2 10.2L5 14.8L0.8 10.2Z" stroke="#9c9aab" stroke-width="1.4" fill="none"/></svg>
<div class="t c" style="left:2196px;top:295px"><span style="color:#f6f4fa">Claude Opus 4.5</span></div>
<div class="t" style="left:2196px;top:316px"><span style="color:#9896aa">Thinking Off</span></div>
<div class="t" style="left:2196px;top:337px"><span style="color:#d0ccdc">51%</span><span style="color:#9896aa"> (102.7K) </span><span style="color:#d0ccdc">$5.64</span></div>
<div class="t" style="left:2176px;top:379px"><span style="color:#9896aa">Modified Files</span></div>
<div class="b" style="left:2326px;top:389px;width:140px;height:2px;background:#5f5d6a"></div>
<div class="t" style="left:2176px;top:421px"><span style="color:#d0ccdc">src/llama.zig</span> <span style="color:#3de8c0">+338</span></div>
<div class="t" style="left:2176px;top:442px"><span style="color:#d0ccdc">src/main.zig</span> <span style="color:#3de8c0">+309</span></div>
<div class="t" style="left:2176px;top:463px"><span style="color:#d0ccdc">README.md</span> <span style="color:#3de8c0">+93</span> <span style="color:#ff5c8c">−160</span></div>
<div class="t" style="left:2176px;top:484px"><span style="color:#d0ccdc">AGENTS.md</span> <span style="color:#3de8c0">+144</span></div>
<div class="t" style="left:2176px;top:505px"><span style="color:#d0ccdc">src/chat.zig</span> <span style="color:#3de8c0">+145</span></div>
<div class="t" style="left:2176px;top:526px"><span style="color:#d0ccdc">build.zig</span> <span style="color:#3de8c0">+65</span> <span style="color:#ff5c8c">−63</span></div>
<div class="t" style="left:2176px;top:547px"><span style="color:#d0ccdc">build.zig.zon</span> <span style="color:#3de8c0">+12</span></div>
<div class="t" style="left:2176px;top:568px"><span style="color:#d0ccdc">src/config.zig</span> <span style="color:#3de8c0">+136</span></div>
<div class="t" style="left:2176px;top:610px"><span style="color:#b3b1be">LSPs</span></div>
<div class="b" style="left:2226px;top:620px;width:240px;height:2px;background:#5f5d6a"></div>
<div class="t" style="left:2176px;top:652px"><span style="color:#62606d">None</span></div>
<div class="t" style="left:2176px;top:694px"><span style="color:#b3b1be">MCPs</span></div>
<div class="b" style="left:2226px;top:704px;width:240px;height:2px;background:#5f5d6a"></div>
<div class="t" style="left:2176px;top:736px"><span style="color:#62606d">None</span></div>
</body></html>
